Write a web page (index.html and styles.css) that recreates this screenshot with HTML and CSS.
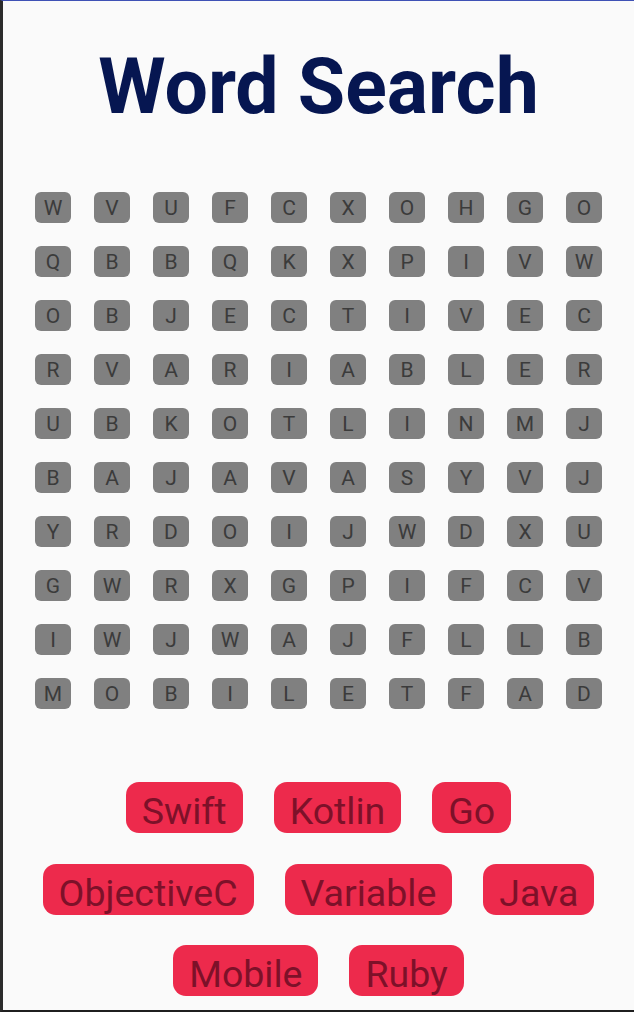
FILE: index.html
```html
<!DOCTYPE html>
<html>
<head>
<meta charset="utf-8">
<link rel="stylesheet" href="styles.css">
</head>
<body>
<div class="screen">
  <h1 class="title">Word Search</h1>
  <div class="grid">
    <span class="cell">W</span><span class="cell">V</span><span class="cell">U</span><span class="cell">F</span><span class="cell">C</span><span class="cell">X</span><span class="cell">O</span><span class="cell">H</span><span class="cell">G</span><span class="cell">O</span>
    <span class="cell">Q</span><span class="cell">B</span><span class="cell">B</span><span class="cell">Q</span><span class="cell">K</span><span class="cell">X</span><span class="cell">P</span><span class="cell">I</span><span class="cell">V</span><span class="cell">W</span>
    <span class="cell">O</span><span class="cell">B</span><span class="cell">J</span><span class="cell">E</span><span class="cell">C</span><span class="cell">T</span><span class="cell">I</span><span class="cell">V</span><span class="cell">E</span><span class="cell">C</span>
    <span class="cell">R</span><span class="cell">V</span><span class="cell">A</span><span class="cell">R</span><span class="cell">I</span><span class="cell">A</span><span class="cell">B</span><span class="cell">L</span><span class="cell">E</span><span class="cell">R</span>
    <span class="cell">U</span><span class="cell">B</span><span class="cell">K</span><span class="cell">O</span><span class="cell">T</span><span class="cell">L</span><span class="cell">I</span><span class="cell">N</span><span class="cell">M</span><span class="cell">J</span>
    <span class="cell">B</span><span class="cell">A</span><span class="cell">J</span><span class="cell">A</span><span class="cell">V</span><span class="cell">A</span><span class="cell">S</span><span class="cell">Y</span><span class="cell">V</span><span class="cell">J</span>
    <span class="cell">Y</span><span class="cell">R</span><span class="cell">D</span><span class="cell">O</span><span class="cell">I</span><span class="cell">J</span><span class="cell">W</span><span class="cell">D</span><span class="cell">X</span><span class="cell">U</span>
    <span class="cell">G</span><span class="cell">W</span><span class="cell">R</span><span class="cell">X</span><span class="cell">G</span><span class="cell">P</span><span class="cell">I</span><span class="cell">F</span><span class="cell">C</span><span class="cell">V</span>
    <span class="cell">I</span><span class="cell">W</span><span class="cell">J</span><span class="cell">W</span><span class="cell">A</span><span class="cell">J</span><span class="cell">F</span><span class="cell">L</span><span class="cell">L</span><span class="cell">B</span>
    <span class="cell">M</span><span class="cell">O</span><span class="cell">B</span><span class="cell">I</span><span class="cell">L</span><span class="cell">E</span><span class="cell">T</span><span class="cell">F</span><span class="cell">A</span><span class="cell">D</span>
  </div>
  <div class="words">
    <div class="word-row">
      <span class="chip">Swift</span><span class="chip">Kotlin</span><span class="chip">Go</span>
    </div>
    <div class="word-row">
      <span class="chip">ObjectiveC</span><span class="chip">Variable</span><span class="chip">Java</span>
    </div>
    <div class="word-row">
      <span class="chip">Mobile</span><span class="chip">Ruby</span>
    </div>
  </div>
</div>
</body>
</html>
```
FILE: styles.css
```css
html, body {
  margin: 0;
  padding: 0;
  background: #2b2b2b;
}
.screen {
  width: 634px;
  height: 1012px;
  box-sizing: border-box;
  border-left: 3px solid #2b2b2b;
  border-top: 1px solid #3f51b5;
  border-bottom: 2px solid #1f1f1f;
  background: #fafafa;
  display: flex;
  flex-direction: column;
  align-items: center;
  font-family: Roboto, "Noto Sans", sans-serif;
}
.title {
  margin: 41px 0 0;
  font-family: Roboto, sans-serif;
  font-weight: 700;
  font-size: 77px;
  line-height: 90px;
  color: #061651;
}
.grid {
  margin-top: 60px;
  display: grid;
  grid-template-columns: repeat(10, 36px);
  grid-auto-rows: 31px;
  column-gap: 23px;
  row-gap: 23px;
}
.cell {
  background: #808080;
  border-radius: 6px;
  color: #3b3b3b;
  font-size: 21px;
  line-height: 31px;
  padding-top: 1px;
  height: 30px;
  text-align: center;
}
.words {
  margin-top: 73px;
  display: flex;
  flex-direction: column;
  align-items: center;
  row-gap: 30.5px;
}
.word-row {
  display: flex;
  justify-content: center;
  column-gap: 31px;
}
.chip {
  background: #ed2a4c;
  color: #7d1129;
  border-radius: 13px;
  font-size: 37.5px;
  line-height: 44px;
  height: 44px;
  padding: 7px 16px 0;
  white-space: nowrap;
}
```
